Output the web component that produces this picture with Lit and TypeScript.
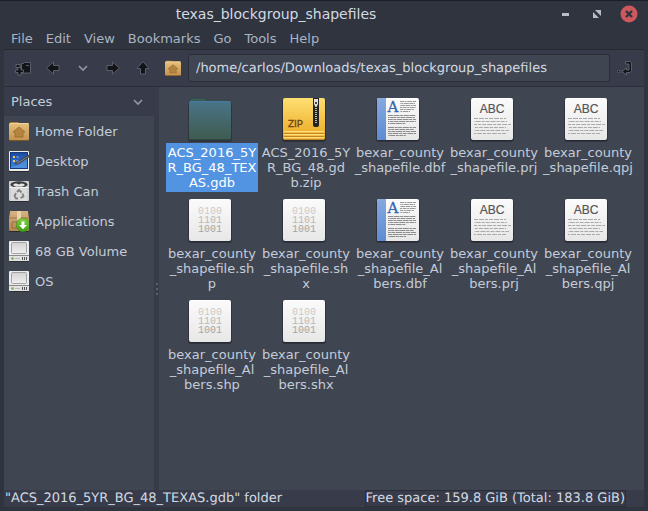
import { LitElement, html, svg, css } from "lit";
import { customElement, state } from "lit/decorators.js";
import { classMap } from "lit/directives/class-map.js";

type FileKind = "folder" | "zip" | "doc" | "text" | "binary";
interface FileEntry {
  kind: FileKind;
  lines: string[];
}

const FILES: FileEntry[] = [
  { kind: "folder", lines: ["ACS_2016_5Y", "R_BG_48_TEX", "AS.gdb"] },
  { kind: "zip", lines: ["ACS_2016_5Y", "R_BG_48.gd", "b.zip"] },
  { kind: "doc", lines: ["bexar_county", "_shapefile.dbf"] },
  { kind: "text", lines: ["bexar_county", "_shapefile.prj"] },
  { kind: "text", lines: ["bexar_county", "_shapefile.qpj"] },
  { kind: "binary", lines: ["bexar_county", "_shapefile.sh", "p"] },
  { kind: "binary", lines: ["bexar_county", "_shapefile.sh", "x"] },
  { kind: "doc", lines: ["bexar_county", "_shapefile_Al", "bers.dbf"] },
  { kind: "text", lines: ["bexar_county", "_shapefile_Al", "bers.prj"] },
  { kind: "text", lines: ["bexar_county", "_shapefile_Al", "bers.qpj"] },
  { kind: "binary", lines: ["bexar_county", "_shapefile_Al", "bers.shp"] },
  { kind: "binary", lines: ["bexar_county", "_shapefile_Al", "bers.shx"] },
];

const MENUS = ["File", "Edit", "View", "Bookmarks", "Go", "Tools", "Help"];

const grad = (id: string, from: string, to: string) => svg`
  <linearGradient id=${id} x1="0" y1="0" x2="0" y2="1">
    <stop offset="0" stop-color=${from} /><stop offset="1" stop-color=${to} />
  </linearGradient>`;

/* Rows of tiny "words" standing for body text on a document icon. */
const rows = (x: number, ys: number[], widths: number[], dash: string, colour: string) =>
  ys.map((y, i) => svg`<path d="M${x} ${y}h${widths[i % widths.length]}" stroke=${colour}
    stroke-width="1" stroke-dasharray=${dash} stroke-dashoffset=${i * 3.4} fill="none" />`);

const sheet = svg`
  <rect x="1" y="2" width="44" height="43" rx="3" fill="#000" opacity=".25" />
  <rect x="2" y="2" width="42" height="42" rx="2" fill="#23262e" opacity=".7" />
  <rect x="2" y="1" width="42" height="42" rx="2" fill="url(#paper)" />
  <path d="M4 1.500h38" stroke="#fff" />`;

const fileIcon = (kind: FileKind) => {
  switch (kind) {
    case "folder":
      return svg`<defs>${grad("teal", "#497488", "#3f5b4e")}</defs>
        <path d="M3 43V4q0-3 2-3h11q2 0 3 2h20q2 0 2 2z" fill="#3c5c56" stroke="#30464a" />
        <rect x="1" y="5" width="44" height="40" rx="3" fill="#20262d" opacity=".55" />
        <rect x="2" y="4" width="42" height="39" rx="2" fill="url(#teal)" />
        <path d="M3 5h40" stroke="#4a7ba4" /><path d="M3 42.500h40" stroke="#2c4641" />`;
    case "zip":
      return svg`<defs>${grad("gold", "#ffdf72", "#e9a821")}</defs>
        <rect x="1" y="2" width="44" height="43" rx="3" fill="#000" opacity=".3" />
        <rect x="2" y="1" width="42" height="42" rx="2" fill="url(#gold)" />
        <rect x="3" y="34" width="40" height="9" rx="1" fill="#c5851d" />
        <path d="M3 34.500h40M3 37.500h40M3 40.500h40" stroke="#ffe07c" />
        <path d="M3 35.500h40M3 38.500h40M3 41.500h40" stroke="#f3bc44" />
        <path d="M32 1h6v27q0 2-2 2h-2q-2 0-2-2z" fill="#25221f" />
        <path d="M35 9v18" stroke="#999" stroke-width="2" stroke-dasharray="1 1" />
        <path d="M35 9v18" stroke="#ddd" stroke-width="1" stroke-dasharray="1 1" />
        <path d="M33 2h4v5l-1 2h-2l-1-2z" fill="#e2e2e2" /><path d="M34 5h2v2h-2z" fill="#444" />
        <text x="7" y="30" class="zip">ZIP</text>`;
    case "doc":
      return svg`<defs>${grad("paper", "#fbfbfb", "#e7e7e7")}${grad("spine", "#85a9df", "#5d8bd3")}</defs>
        ${sheet}
        <path d="M4 1h7v42H4q-2 0-2-2V3q0-2 2-2z" fill="url(#spine)" />
        <text x="12.500" y="15" class="serif">A</text>
        ${rows(25, [4.5, 6.5, 8.5, 10.5, 12.5, 14.5], [16, 15, 16, 16, 14, 10], "4 .6 2 .6 5 .6", "#999")}
        ${rows(13, [18.5, 20.5, 22.5, 24.5, 26.5], [28, 27, 28, 28, 18], "5 .6 6 .6 3 .6", "#8c8c8c")}
        ${rows(13, [30.5, 32.5, 34.5, 36.5, 38.5], [28, 26, 28, 28, 18], "6 .6 3 .6 4 .6", "#8c8c8c")}`;
    case "text":
      return svg`<defs>${grad("paper", "#fbfbfb", "#e7e7e7")}</defs>${sheet}
        <text x="23" y="16" text-anchor="middle" class="abc">ABC</text>
        ${rows(5, [21.5, 24.5, 27.5, 30.5, 33.5, 36.5], [32, 33, 37, 32, 35, 33], "4 1 5 1 3 1", "#a9a9a9")}`;
    case "binary":
      return svg`<defs>${grad("paper", "#fbfbfb", "#e7e7e7")}</defs>${sheet}
        <text x="23" y="16" text-anchor="middle" class="bin light">0100</text>
        <text x="23" y="25" text-anchor="middle" class="bin mid">1101</text>
        <text x="23" y="34" text-anchor="middle" class="bin">1001</text>`;
  }
};

const home = svg`<defs>${grad("tan", "#e6c07d", "#c49450")}</defs>
  <path d="M1 18V2q0-1 1-1h7l1 1h8q1 0 1 1v15z" fill="#b17d35" />
  <rect x="0" y="3" width="20" height="17" rx="1" fill="#7a5727" />
  <rect x="0" y="2" width="20" height="17" rx="1" fill="url(#tan)" />
  <path d="M1 2.500h18" stroke="#f0d49d" />
  <path d="M10 6l6 5h-2v5H6v-5H4z" fill="#b58440" stroke="#95682c" stroke-width=".8" />`;

const drive = svg`<defs>${grad("steel", "#d2d2d2", "#f0f0f0")}</defs>
  <rect x="0" y="1" width="20" height="20" rx="1" fill="#222" opacity=".6" />
  <rect x="0" y="0" width="20" height="20" rx="1" fill="#ececec" />
  <rect x="2.500" y="1.500" width="15" height="11" rx="1" fill="url(#steel)" stroke="#a2a2a2" />
  <path d="M0 14.500h20" stroke="#8a8a8a" />
  <rect x="0" y="15" width="20" height="5" rx="1" fill="#e2e2e2" />
  <circle cx="3.500" cy="17.500" r="1.300" fill="#73b04c" />
  <path d="M6 17.500h5" stroke="#bbb" /><path d="M13.500 16v3M15.500 16v3M17.500 16v3" stroke="#555" />`;

const desktop = svg`<defs>${grad("blue", "#1c4aa0", "#3f86dc")}</defs>
  <rect x="0" y="1" width="20" height="20" rx="1" fill="#181b22" opacity=".7" />
  <rect x="0" y="0" width="20" height="20" rx="1" fill="#ecece9" />
  <rect x="1.500" y="1.500" width="17" height="16" fill="url(#blue)" stroke="#173a7d" />
  <path d="M2 16C8 15 13 12 18 7v10H2z" fill="#5d9ce5" opacity=".55" />
  <path d="M4 5h2v2H4zM4 9h2v2H4z" fill="#f0ca55" /><path d="M7.500 6h2M7.500 10h2" stroke="#a9c5ef" />
  <path d="M6 13l3-2.500L20 4v2L9 13z" fill="#777" stroke="#333" stroke-width=".7" />`;

const trash = svg`
  <rect x="0" y="1" width="20" height="20" rx="2" fill="#181b22" opacity=".6" />
  <rect x="0" y="0" width="20" height="20" rx="1" fill="#cfcfcf" />
  <rect x="2" y="7" width="16" height="13" fill="#dadada" />
  <ellipse cx="10" cy="3.500" rx="8.500" ry="3.300" fill="#3c3c3c" />
  <path d="M4 4q2-2.500 6-.5 3-2 6 .5-2 2.500-6 1.500-4 1-6-1.500z" fill="#e4e4e4" />
  <path d="M1 6.500h18" stroke="#f1f1f1" />
  <path d="M8 11l2-2 2.500 2.500M13.500 12.500l1 3-3 1.500M9 17.500H7L5.500 15l1.500-3" fill="none" stroke="#808080" stroke-width="1.800" />`;

const apps = svg`<defs>${grad("box", "#d6b384", "#b48650")}${grad("green", "#83d340", "#3b9b13")}</defs>
  <rect x="0" y="1" width="20" height="20" rx="1" fill="#181b22" opacity=".6" />
  <path d="M1 0h18l1 7v12q0 1-1 1H1q-1 0-1-1V7z" fill="url(#box)" />
  <path d="M0 7h20" stroke="#a27643" /><path d="M8 0h4v9H8z" fill="#ead3aa" />
  <path d="M3 11h5v6H3z" fill="none" stroke="#99703d" />
  <circle cx="14" cy="14" r="6.800" fill="url(#green)" stroke="#438c20" stroke-width=".6" />
  <path d="M12.500 10.500h3v3.500h2.500L14 18.200 10 14h2.500z" fill="#fff" />`;

const PLACES = [
  { label: "Home Folder", icon: home },
  { label: "Desktop", icon: desktop },
  { label: "Trash Can", icon: trash },
  { label: "Applications", icon: apps },
  { label: "68 GB Volume", icon: drive },
  { label: "OS", icon: drive },
];

const arrow = (angle: number) => html`<svg class="sym" viewBox="0 0 16 16">
  <path transform="rotate(${angle} 8 8)" d="M1.500 8L8.500 2v3.500h5.500v5H8.500V14z" /></svg>`;
const chevron = html`<svg class="chev" viewBox="0 0 12 8"><path d="M2 2l4 4 4-4" /></svg>`;

@customElement("app-root")
export class AppRoot extends LitElement {
  @state() private selected = 0;

  static styles = css`
    :host {
      display: block;
      font: 13px/15px "DejaVu Sans", sans-serif;
      color: #c3ccd8;
    }
    * { box-sizing: border-box; }
    button, input, select {
      font: inherit;
      color: inherit;
      margin: 0;
      padding: 0;
      border: 0;
      background: none;
      outline: none;
    }
    svg { display: block; flex: none; }
    .window {
      display: flex;
      flex-direction: column;
      min-height: 100vh;
      padding: 0 4px 4px;
      background: #2f343f;
      border-top: 1px solid #1a1d2b;
    }
    .titlebar { display: flex; align-items: center; height: 26px; }
    .title {
      flex: 1;
      margin: 0;
      font-size: 14px;
      font-weight: 400;
      text-align: center;
      color: #d3dae3;
    }
    .controls { display: flex; gap: 14px; padding: 0 6px 0 8px; }
    .controls svg { width: 18px; height: 18px; }
    .menus { display: flex; height: 22px; gap: 13px; padding: 0 7px; color: #a9b4c4; }
    .toolbar {
      display: flex;
      align-items: center;
      height: 38px;
      padding: 0 4px;
      background: #383c4a;
      border-top: 1px solid #262a33;
      border-bottom: 1px solid #2b2e39;
    }
    .toolbar button { display: flex; justify-content: center; width: 30px; }
    .sym { width: 16px; height: 16px; fill: #131418; stroke: #686c78; stroke-width: .8; }
    .chev { width: 12px; height: 8px; fill: none; stroke: #9297a7; stroke-width: 1.6; }
    .path {
      flex: 1;
      min-width: 0;
      height: 28px;
      padding: 0 7px;
      color: #d3dae3;
      background: #404552;
      border: 1px solid #2b2e39;
      border-radius: 3px;
      text-rendering: geometricPrecision;
    }
    .body { display: flex; flex: 1; background: #404552; }
    .side { width: 150px; }
    .places { display: grid; grid-template-columns: 1fr 32px; align-items: center; height: 29px; background: #383c4a; }
    .places select { grid-area: 1 / 1 / 2 / 3; height: 29px; padding: 0 7px; appearance: none; }
    .places svg { grid-area: 1 / 2; justify-self: center; pointer-events: none; }
    .place { display: flex; align-items: center; gap: 6px; width: 100%; height: 30px; padding: 0 5px; }
    .split {
      display: flex;
      flex-direction: column;
      align-items: center;
      justify-content: center;
      gap: 3px;
      width: 5px;
      background: #383c4a;
    }
    .split i { width: 2px; height: 2px; background: #5c6070; }
    .files {
      flex: 1;
      display: grid;
      grid-template-columns: repeat(auto-fill, 92px);
      align-content: start;
      gap: 6px 2px;
      padding: 10px 7px;
    }
    .file { display: flex; flex-direction: column; align-items: center; }
    .file svg { width: 46px; height: 46px; margin-right: 4px; }
    .name { width: 92px; padding: 2px 0; text-align: center; white-space: nowrap; }
    .line { display: block; }
    .on .name { background: #5294e2; color: #fff; }
    .status {
      display: flex;
      justify-content: space-between;
      align-items: center;
      height: 17px;
      padding: 0 18px 0 1px;
      background: #383c4a;
      color: #d3dae3;
      text-rendering: geometricPrecision;
    }
    .free { border: 1px solid #2b2e39; }
    .zip { font: 10px Lato, sans-serif; fill: #6f4412; stroke: #6f4412; stroke-width: .3; }
    .serif { font: 15px "DejaVu Serif", serif; fill: #3566ae; stroke: #3566ae; stroke-width: .3; }
    .abc { font: 12px "Liberation Sans", sans-serif; fill: #555; stroke: #555; stroke-width: .2; }
    .bin { font: 10px "Liberation Mono", monospace; fill: #a6a6a6; }
    .light { fill: #cbcbcb; }
    .mid { fill: #b9b9b9; }
  `;

  render() {
    return html`<div class="window">
      <header class="titlebar">
        <h1 class="title">texas_blockgroup_shapefiles</h1>
        <div class="controls">
          <button aria-label="Minimize"><svg viewBox="0 0 18 18"><path d="M6 8h7v3H6z" fill="#b8bdc8" /></svg></button>
          <button aria-label="Restore"><svg viewBox="0 0 18 18"><path d="M7 5h6v6zM5 7v6h6z" fill="#b8bdc8" /></svg></button>
          <button aria-label="Close"><svg viewBox="0 0 18 18"><circle cx="9" cy="9" r="8.500" fill="#cc575d" />
            <path d="M6 6l6 6M12 6l-6 6" stroke="#2f343f" stroke-width="2.400" /></svg></button>
        </div>
      </header>
      <nav class="menus">${MENUS.map((m) => html`<button>${m}</button>`)}</nav>
      <div class="toolbar">
        <button aria-label="New tab"><svg class="sym" viewBox="0 0 16 16">
          <path d="M6.500 3.500h2l1-1h6v10.500h-9z" /><path d="M1 4.500h4v3H1z" /><path d="M11 5.500h3" />
          <path d="M3 7.500h3v2.500h2.500v2.500H6V15H3v-2.500H.5V10H3z" /></svg></button>
        <button aria-label="Back">${arrow(0)}</button>
        <button aria-label="History">${chevron}</button>
        <button aria-label="Forward">${arrow(180)}</button>
        <button aria-label="Up">${arrow(90)}</button>
        <button aria-label="Home"><svg width="16" height="16" viewBox="0 0 20 20">${home}</svg></button>
        <input class="path" aria-label="Location" value="/home/carlos/Downloads/texas_blockgroup_shapefiles" />
        <button aria-label="Jump to"><svg class="sym" viewBox="0 0 16 16">
          <path d="M8.500 1.500h4.500l1.500 1.500v7.500L13 12.500H9.500V15L5 11.500l4.500-3.500v2h2.500V4H8.500z" />
          <path d="M.5 10.500h2v2h-2zM3 10.500h1.500v2H3z" stroke-width=".5" /></svg></button>
      </div>
      <main class="body">
        <aside class="side">
          <div class="places"><select aria-label="Side pane"><option>Places</option></select>${chevron}</div>
          ${PLACES.map((p) => html`<button class="place">
            <svg width="20" height="21" viewBox="0 0 20 21">${p.icon}</svg><span>${p.label}</span></button>`)}
        </aside>
        <div class="split"><i></i><i></i><i></i></div>
        <section class="files">
          ${FILES.map((f, i) => html`<button class=${classMap({ file: true, on: i === this.selected })}
            @click=${() => { this.selected = i; }}>
            <svg viewBox="0 0 46 46">${fileIcon(f.kind)}</svg>
            <span class="name">${f.lines.map((l) => html`<span class="line">${l}</span>`)}</span>
          </button>`)}
        </section>
      </main>
      <footer class="status">
        <span>"ACS_2016_5YR_BG_48_TEXAS.gdb" folder</span>
        <span class="free">Free space: 159.8 GiB (Total: 183.8 GiB)</span>
      </footer>
    </div>`;
  }
}
